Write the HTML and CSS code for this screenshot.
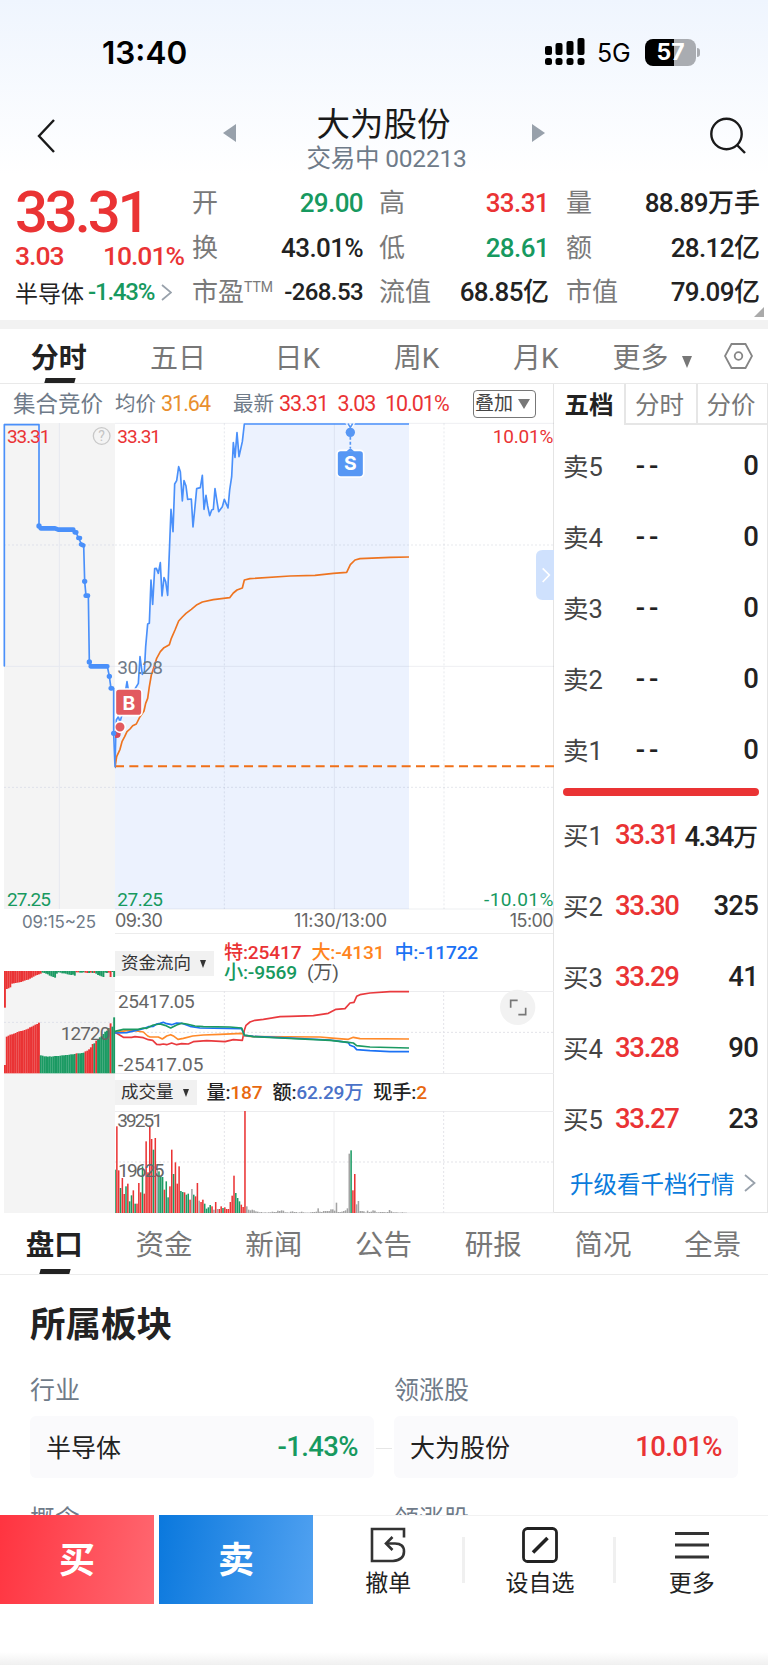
FILE: index.html
```html
<!DOCTYPE html>
<html lang="zh-CN">
<head>
    <meta charset="UTF-8">
    <title>大为股份</title>
    <meta name="viewport" content="width=device-width, initial-scale=1.0">
    <link rel="stylesheet" href="styles.css">
</head>
<body>
<div class="top">
    <div class="status">
        <span class="time">13:40</span>
        <svg class="signal" width="40" height="28" viewBox="0 0 40 28">
            <rect x="0" y="8" width="7" height="9" rx="2"/>
            <rect x="10.5" y="5" width="7" height="12" rx="2"/>
            <rect x="21.5" y="3" width="7" height="14" rx="2"/>
            <rect x="32.5" y="0" width="7" height="17" rx="2"/>
            <rect x="0" y="20" width="7" height="7" rx="2.5"/>
            <rect x="10.5" y="20" width="7" height="7" rx="2.5"/>
            <rect x="21.5" y="20" width="7" height="7" rx="2.5"/>
            <rect x="32.5" y="20" width="7" height="7" rx="2.5"/>
        </svg>
        <span class="net">5G</span>
        <span class="battery">57</span>
    </div>
    <div class="head">
        <svg width="20" height="36" viewBox="0 0 20 36"><path d="M18 2L3 18L18 34" fill="none" stroke="#1a1a1a" stroke-width="2.4"/></svg>
        <svg class="prev" width="14" height="18" viewBox="0 0 14 18"><path d="M13 0V18L0 9z" fill="#98a1ab"/></svg>
        <div class="title">
            <h1>大为股份</h1>
            <p>交易中 002213</p>
        </div>
        <svg class="next" width="14" height="18" viewBox="0 0 14 18"><path d="M0 0V18L13 9z" fill="#98a1ab"/></svg>
        <svg width="38" height="38" viewBox="0 0 38 38"><g fill="none" stroke="#1a1a1a" stroke-width="2.4"><circle cx="17.5" cy="17" r="15.2"/><path d="M28 28L36 36"/></g></svg>
    </div>
    <div class="quote">
        <div class="now">
            <div class="price num red">33.31</div>
            <div class="diff num red"><span>3.03</span><span>10.01%</span></div>
            <div class="trade">半导体<b class="num green">-1.43%</b><svg width="11" height="17" viewBox="0 0 11 17"><path d="M1 1L10 8.5L1 16" fill="none" stroke="#98a1ab" stroke-width="1.7"/></svg></div>
        </div>
        <dl class="cells">
            <dt>开</dt><dd class="green">29.00</dd><dt>高</dt><dd class="red">33.31</dd><dt>量</dt><dd>88.89<i>万手</i></dd>
            <dt>换</dt><dd>43.01%</dd><dt>低</dt><dd class="green">28.61</dd><dt>额</dt><dd>28.12<i>亿</i></dd>
            <dt>市盈<sup>TTM</sup></dt><dd class="sm">-268.53</dd><dt>流值</dt><dd>68.85<i>亿</i></dd><dt>市值</dt><dd>79.09<i>亿</i></dd>
        </dl>
        <span class="corner"></span>
    </div>
</div>

<div class="period">
    <span class="cur">分时</span><span>五日</span><span>日K</span><span>周K</span><span>月K</span>
    <span class="more">更多<i class="caret"></i></span>
    <svg width="29" height="26" viewBox="0 0 29 26"><g fill="none" stroke="#858585" stroke-width="1.8"><path d="M7.5 1H21.5L28 13L21.5 25H7.5L1 13z"/><circle cx="14.5" cy="13" r="3.8"/></g></svg>
</div>

<div class="main">
    <div class="chart">
        <div class="info">
            <span class="jj">集合竞价</span>
            <span class="avg">均价<b class="orange">31.64</b></span>
            <span class="last">最新<b class="red">33.31</b><b class="red">3.03</b><b class="red">10.01%</b></span>
            <span class="add">叠加<i class="caret"></i></span>
        </div>
        <div class="plots">
            <!-- 集合竞价 -->
            <svg class="auction" width="111" height="790" viewBox="12 9 333 2370">
                <rect x="12" y="9" width="333" height="1458" fill="#f4f4f4"/>
                <rect x="12" y="1653" width="333" height="726" fill="#f4f4f4"/>
                <path d="M178 9V1467M12 739H345" stroke="#e6e8f0" stroke-width="3"/>
                <path d="M12 375H345M12 1102H345M12 1807H345" stroke="#dfe1ea" stroke-width="3" stroke-dasharray="6 6"/>
                <g fill="none" stroke="#4a90fa" stroke-linejoin="round" stroke-linecap="round">
                    <path stroke-width="5" d="M13 738V14H117V318L122 325H165L175 329H220L228 338L236 354L245 374H251L254 484L258 527H265L268 727L272 739H322L328 769L333 805H341V940L345 1040"/>
                    <path stroke-width="14" d="M122 325H165L175 329H220M272 739H322M235 354H240M243 373L250 376M257 527H264M332 805H336M224 337H229"/>
                    <path stroke-width="16" d="M117 318h.1M254 484h.1M268 726h.1M328 769h.1M341 940h.1"/>
                </g>
                <g id="auc"></g>
                <circle cx="305" cy="48" r="25" fill="none" stroke="#c8c8c8" stroke-width="4"/>
                <text x="305" y="62" class="q">?</text>
                <text x="21" y="68" textLength="130" class="t red">33.31</text>
                <text x="21" y="1458" textLength="132" class="t green">27.25</text>
                <text x="66" y="1523" textLength="222" class="ax">09:15~25</text>
                <text x="182" y="1860" textLength="149" class="t gray">12720</text>
            </svg>
            <div class="right">
                <!-- 分时走势 -->
                <svg width="439" height="487" viewBox="15 9 1317 1461">
                    <path d="M15 1045L17 960L19 900L25 890L30 905L36 885L44 830L51 785L55 810L60 850L68 815L73 810L85 790L90 710L97 763L103 755L107 680L113 612L118 610L123 480L128 553L134 446L139 445L145 460L151 428L156 528L162 473L167 485L173 526L183 268L189 335L194 192L200 182L206 140L211 155L217 243L222 182L228 198L233 238L244 237L249 321L255 260L260 206L271 203L277 166L282 268L288 226L293 258L299 287L305 270L310 268L315 206L321 245L326 275L337 260L343 238L354 264L359 210L365 170L370 68L375 112L381 38L387 110L397 65L403 12H897V1467H15z" fill="#ecf2fe"/>
                    <path d="M15 10H1332M15 1467H1332M15 739H1332M673 10V1467" stroke="#64718c" stroke-opacity=".11" stroke-width="3"/>
                    <path d="M15 375H1332M15 1102H1332M343 10V1467M1002 10V1467" stroke="#64718c" stroke-opacity=".16" stroke-width="3" stroke-dasharray="6 6"/>
                    <path d="M15 1045L17 960L19 900L25 890L30 905L36 885L44 830L51 785L55 810L60 850L68 815L73 810L85 790L90 710L97 763L103 755L107 680L113 612L118 610L123 480L128 553L134 446L139 445L145 460L151 428L156 528L162 473L167 485L173 526L183 268L189 335L194 192L200 182L206 140L211 155L217 243L222 182L228 198L233 238L244 237L249 321L255 260L260 206L271 203L277 166L282 268L288 226L293 258L299 287L305 270L310 268L315 206L321 245L326 275L337 260L343 238L354 264L359 210L365 170L370 68L375 112L381 38L387 110L397 65L403 12H897" fill="none" stroke="#4a90fa" stroke-width="5" stroke-linejoin="round"/>
                    <path d="M15 1043L20 1010L30 988L36 965L44 950L51 935L60 927L68 917L79 912L90 890L102 873L107 850L113 835L118 800L124 765L134 735L140 715L151 695L162 683L178 674L184 655L195 630L206 603L217 591L228 580L244 568L261 554L277 546L310 539L359 533L370 519L381 510L397 504L403 480L420 476L540 468L615 466L670 460L710 457L721 434L735 420L750 416L840 412L897 411" fill="none" stroke="#ee7420" stroke-width="5" stroke-linejoin="round"/>
                    <path d="M15 1039H1332" stroke="#f07018" stroke-width="6" stroke-dasharray="27 16"/>
                    <text x="22" y="68" textLength="131" class="t red">33.31</text>
                    <text x="22" y="761" textLength="137" class="t slate">30.28</text>
                    <text x="22" y="1458" textLength="137" class="t green">27.25</text>
                    <text x="1148" y="68" textLength="182" class="t red">10.01%</text>
                    <text x="1122" y="1458" textLength="208" class="t green">-10.01%</text>
                    <g stroke="#fff" stroke-width="5">
                        <circle cx="20" cy="942" r="12" fill="#d94a5a" stroke="none"/>
                        <circle cx="30" cy="921" r="16" fill="#e25a60"/>
                        <rect x="16" y="807" width="80" height="80" rx="11" fill="#e25a60"/>
                        <path d="M706 10L721 30L736 10z" fill="#fff" stroke="none"/>
                        <path d="M714 11L721 22L728 11" fill="none" stroke="#5797f4"/>
                        <rect x="681" y="91" width="80" height="80" rx="11" fill="#5797f4"/>
                        <path d="M708 95L721 84L734 95z" fill="#5797f4" stroke="none"/>
                    </g>
                    <circle cx="721" cy="37" r="14" fill="#5797f4"/>
                    <path d="M721 50V84" stroke="#5797f4" stroke-width="5" stroke-dasharray="9 6"/>
                    <text x="57" y="869" class="mark">B</text>
                    <text x="721" y="149" class="mark">S</text>
                    <path d="M1332 390H1298Q1278 390 1278 410V520Q1278 540 1298 540H1332z" fill="#cfe1fd"/>
                    <path d="M1298 445L1318 465L1298 486" fill="none" stroke="#fff" stroke-width="5"/>
                </svg>
                <div class="axis"><span>09:30</span><span>11:30/13:00</span><span>15:00</span></div>
                <!-- 资金流向 -->
                <div class="legend flow">
                    <span class="pick">资金流向<i class="caret"></i></span>
                    <p><b class="red">特:25417</b><b class="amber">大:-4131</b><b class="blue">中:-11722</b><br><b class="green">小:-9569</b><em>(万)</em></p>
                </div>
                <svg width="439" height="83" viewBox="345 212 1317 249">
                    <path d="M345 213.5H1662M345 459.5H1662M1002 212V460" stroke="#ececee" stroke-width="3"/>
                    <path d="M345 336H1662M673 212V460M1331 212V460" stroke="#e3e3e8" stroke-width="3" stroke-dasharray="6 6"/>
                    <g fill="none" stroke-width="5" stroke-linejoin="round">
                        <path stroke="#e93a3e" d="M345 336L360 345L370 351H395L405 349L430 352L445 358L458 360L470 372L480 373L490 371L500 373L515 368L530 373L545 370L565 371L580 364L620 361L675 364L700 358L727 360L733 330L738 315L750 305L765 300L790 297L840 289L870 288L940 286L985 279L1008 267L1035 265L1050 248L1062 246L1070 228L1080 223L1110 218L1170 214H1227"/>
                        <path stroke="#ff8a2a" d="M345 336L380 331L400 330L430 335L443 347L450 350H475L487 356L500 347L512 343L522 348L534 357L550 354L578 347L610 344L660 342L727 339L733 347L760 349L960 350L1005 354L1045 357L1060 351L1080 355L1227 356"/>
                        <path stroke="#1c72f4" d="M345 338L380 337L430 325L445 319L460 318L470 311L480 309L490 306L500 310L515 313L530 308L545 309L570 318L600 323L725 325L733 345L760 348L840 352L990 359L1020 363L1045 367L1050 375L1062 379L1070 388L1110 391L1170 394H1227"/>
                        <path stroke="#1c9a62" d="M345 333L370 327H415L430 323L440 324L460 314L480 311L495 315L512 323L530 314L545 309L560 311L585 317L610 319L690 320L725 323L733 344L760 349L840 353L990 360L1045 366L1060 368L1070 376L1110 380L1227 383"/>
                    </g>
                    <circle cx="1553" cy="261" r="53" fill="#f2f2f2"/>
                    <path d="M1532 262V240H1553M1577 262V283H1555" fill="none" stroke="#777" stroke-width="5"/>
                    <text x="354" y="264" textLength="230" class="t gray">25417.05</text>
                    <text x="354" y="452" textLength="256" class="t gray">-25417.05</text>
                </svg>
                <!-- 成交量 -->
                <div class="legend vol">
                    <span class="pick">成交量<i class="caret"></i></span>
                    <p><b>量:<u class="deep">187</u></b><b>额:<u class="indigo">62.29万</u></b><b>现手:<u class="deep">2</u></b></p>
                </div>
                <svg width="439" height="102" viewBox="345 572 1317 306">
                    <path d="M345 573.5H1662M345 877H1662M1002 572V878" stroke="#ececee" stroke-width="3"/>
                    <path d="M345 725H1662M673 572V878M1331 572V878" stroke="#e3e3e8" stroke-width="3" stroke-dasharray="6 6"/>
                    <g id="vol"></g>
                    <text x="352" y="620" textLength="137" class="t gray">39251</text>
                    <text x="354" y="771" textLength="139" class="t gray">19625</text>
                </svg>
            </div>
        </div>
    </div>

    <div class="level">
        <div class="level-tab"><span class="cur">五档</span><span>分时</span><span>分价</span></div>
        <ul class="sell">
            <li><span>卖5</span><b>--</b><em>0</em></li>
            <li><span>卖4</span><b>--</b><em>0</em></li>
            <li><span>卖3</span><b>--</b><em>0</em></li>
            <li><span>卖2</span><b>--</b><em>0</em></li>
            <li><span>卖1</span><b>--</b><em>0</em></li>
        </ul>
        <div class="line"></div>
        <ul class="buy">
            <li><span>买1</span><b>33.31</b><em class="wan">4.34<i>万</i></em></li>
            <li><span>买2</span><b>33.30</b><em>325</em></li>
            <li><span>买3</span><b>33.29</b><em>41</em></li>
            <li><span>买4</span><b>33.28</b><em>90</em></li>
            <li><span>买5</span><b>33.27</b><em>23</em></li>
        </ul>
        <a class="up">升级看千档行情<svg width="12" height="18" viewBox="0 0 12 18"><path d="M1 1L10.5 9L1 17" fill="none" stroke="#98a1ab" stroke-width="1.8"/></svg></a>
    </div>
</div>

<div class="nav">
    <span class="cur">盘口</span><span>资金</span><span>新闻</span><span>公告</span><span>研报</span><span>简况</span><span>全景</span>
</div>

<div class="plate">
    <h2>所属板块</h2>
    <div class="pair">
        <div><h3>行业</h3><div class="card">半导体<b class="green">-1.43%</b></div></div>
        <i class="link"></i>
        <div><h3>领涨股</h3><div class="card">大为股份<b class="red">10.01%</b></div></div>
    </div>
    <div class="pair">
        <div><h3>概念</h3></div>
        <i class="link"></i>
        <div><h3>领涨股</h3></div>
    </div>
</div>

<div class="bar">
    <a class="btn b-buy">买</a>
    <a class="btn b-sell">卖</a>
    <a class="tool">
        <svg width="36" height="36" viewBox="0 0 36 36"><g fill="none" stroke="#333" stroke-width="2.6"><path d="M34 10.500V2H2V34H23Q34 33 34 24.500Q34 16.500 25 16.500H17"/><path d="M22.500 10L16 16.500L22.500 23"/></g></svg>
        撤单
    </a>
    <a class="tool">
        <svg width="36" height="36" viewBox="0 0 36 36"><g fill="none" stroke="#222" stroke-width="2.8"><rect x="1.500" y="1.500" width="33" height="33" rx="4"/><path d="M11 25.500L25.500 11" stroke-width="3.6"/></g></svg>
        设自选
    </a>
    <a class="tool">
        <svg width="36" height="36" viewBox="0 0 36 36"><path d="M1 6.500H35M1 18H35M1 30H35" stroke="#333" stroke-width="2.8"/></svg>
        更多
    </a>
</div>
<div class="home"></div>

<script>
    var color={r:"#ea3334",g:"#1b9a63",h:"#a3a3a3"};

    function bar(x,y,w,h,c){
        return '<rect x="'+x+'" y="'+y+'" width="'+w+'" height="'+h+'" fill="'+color[c]+'"/>';
    }

    // 成交量，每分钟一根，第一根只露一半
    var vol="g130 r260 r128 g75 r105 r57 g80 r88 g35 g53 r68 g28 r28 r90 r62 g140 r58 r215 r122 r260 r222 g190 r225 h130 g125 g110 g108 r70 g95 g47 r80 r190 g117 r152 r88 r140 g66 g63 r62 g55 g58 r40 h72 g55 r50 r90 h37 r33 r40 g28 g13 g17 g24 r20 h10 r33 h12 r12 r20 g15 r17 r12 r12 r33 r52 r112 g60 g45 g35 r25 r18 r306 h20 h10 h8 h10 h8 h5 h4 h2 h3 h1 h2 h1 h2 h2 h4 h3 h3 h7 h6 h8 h7 h2 h2 h1 h4 h5 h3 h3 h1 h2 h4 h2 h1 h1 h1 h2 h3 h3 h4 h14 h4 h3 h6 h6 h6 h6 h11 h11 h7 h31 h3 h3 h4 h6 h8 h14 h178 g188 r68 r117 h26 h36 h6 h6 h5 h1 h7 h3 h4 h8 h7 h2 h2 h3 h3 h3 h2 h3 h9 h5 h2 h2 h2 h1 h1 h2 h1 h1".split(" ");
    document.querySelector("#vol").innerHTML=vol.map(function (v,i){
        var h=v.slice(1)*1;
        var x=i?342.8+i*5.49:345;
        return bar(x.toFixed(1),878-h,i?4.6:2.4,h,v.charAt(0));
    }).join("");

    // 竞价：上面未匹配量，下面匹配量
    var up="r110 r54 r52 r49 r38 r37 r36 r35 r34 r33 r31 r29 r27 r26 r23 r20 r17 r14 r12 r10 r8 g5 g6 g8 g10 g14 g16 g18 g20 g8 g4 g5 g7 g7 g8 g10 g11 g12 g11 g14 r4 r4 g5 g5 g4 r5 r6 g6 r5 g6 r6 g8 g12 g14 g16 g18 g5 g6 r5 r18 g3 g18".split(" ");
    var down="r25 r110 r113 r116 r117 r119 r121 r124 r126 r127 r128 r130 r132 r134 r138 r140 r143 r146 r148 r152 g54 g53 g51 g51 g50 g51 g50 g51 g52 g52 g52 g53 g54 g54 g55 g55 g56 g57 g57 g58 r60 g60 g60 g61 g62 r66 r68 r72 r78 r88 g90 r98 g102 g108 g112 g118 g125 g128 g136 r150 g140 g168".split(" ");
    function auc(list,top){
        return list.map(function (v,i){
            var h=v.slice(1)*1,w=333/list.length;
            return bar((12+i*w).toFixed(1),top?1653:1960-h,(w+.3).toFixed(1),h,v.charAt(0));
        }).join("");
    }
    document.querySelector("#auc").innerHTML=auc(up,true)+auc(down,false);
</script>
</body>
</html>
```

FILE: styles.css
```css
*{
    margin: 0;
    padding: 0;
    box-sizing: border-box;
}
body{
    width: 768px;
    height: 1665px;
    overflow: hidden;
    background: #fff;
    color: #222;
    font-family: Roboto, "Noto Sans CJK SC", sans-serif;
}
i,em,u{
    font-style: normal;
    text-decoration: none;
}
b{
    font-weight: 500;
}
ul{
    list-style: none;
}
svg{
    display: block;
    flex: none;
}
.red{ color: #ea3334; fill: #ea3334; }
.green{ color: #17995f; fill: #17995f; }
.orange{ color: #e98f2e; }
.amber{ color: #ff8420; }
.blue{ color: #1c72f4; }
.deep{ color: #e8680f; }
.indigo{ color: #4a72c8; }
.gray{ fill: #666; }
.slate{ fill: #6f7b89; }

/* 顶部 */
.top{
    height: 320px;
    background: linear-gradient(#eff5fe, #fff 175px);
}
.status{
    height: 104px;
    padding: 0 72px 0 102px;
    display: flex;
    align-items: center;
    font-family: Inter, sans-serif;
    color: #000;
}
.time{
    font-size: 31.500px;
    font-weight: 600;
    flex: 1;
    padding-top: 1px;
}
.net{
    font-size: 25px;
    width: 36px;
    margin: 1px 12px 0 12px;
    letter-spacing: -.2px;
}
.battery{
    position: relative;
    width: 51px;
    height: 27px;
    border-radius: 8px;
    background: linear-gradient(90deg, #000 57%, #a9acb1 57%);
    color: #fff;
    font-size: 23px;
    font-weight: 700;
    line-height: 27px;
    text-align: center;
}
.battery:after{
    content: "";
    position: absolute;
    right: -4px;
    top: 9px;
    width: 3px;
    height: 9px;
    border-radius: 0 3px 3px 0;
    background: #a9acb1;
}
.head{
    height: 76px;
    padding: 0 21px 0 36px;
    display: flex;
    align-items: center;
}
.head > svg{
    margin-top: -12px;
}
.head .prev,.head .next{
    margin-top: -19px;
}
.prev{
    margin-left: 167px;
}
.title{
    flex: 1;
    height: 76px;
    text-align: center;
    margin-right: -8px;
}
.next{
    margin-right: 163px;
}
.title h1{
    font-size: 33.500px;
    line-height: 40px;
    font-weight: 400;
    margin: 1px 0 0 -10px;
    color: #1a1a1a;
}
.title p{
    font-size: 24.500px;
    line-height: 26px;
    margin: 1px 0 0 -4px;
    color: #6f7b89;
    letter-spacing: -.2px;
}
.quote{
    position: relative;
    height: 140px;
    padding: 0 8px 0 15px;
    display: flex;
}
.num{
    font-weight: 500;
}
.now{
    width: 177px;
    flex: none;
}
.price{
    font-size: 58px;
    line-height: 64px;
    letter-spacing: -3.1px;
}
.diff{
    display: flex;
    width: 169px;
    justify-content: space-between;
    font-size: 26.500px;
    line-height: 24px;
    letter-spacing: -1px;
}
.trade{
    display: flex;
    align-items: center;
    font-size: 23px;
    height: 48px;
}
.trade b{
    font-size: 24px;
    margin: 0 7px 0 4px;
    letter-spacing: -1.2px;
}
.cells{
    display: grid;
    grid-template-columns: 82px 89px 98px 88px 72px 1fr;
    grid-auto-rows: 44.500px;
    line-height: 47px;
    font-size: 26px;
    flex: 1;
}
.cells dt:nth-of-type(3n+2){
    padding-left: 16px;
}
.cells dt:nth-of-type(3n){
    padding-left: 17px;
}
.cells dt{
    color: #7a7a7a;
    white-space: nowrap;
}
.cells dd{
    font-weight: 500;
    white-space: nowrap;
    letter-spacing: -.6px;
    justify-self: end;
}
.cells dd i{
    letter-spacing: 0;
}
.cells .sm{
    font-size: 24px;
}
.cells sup{
    font-size: 14px;
    line-height: 0;
    vertical-align: 9px;
}
.corner{
    position: absolute;
    right: 4px;
    bottom: 3px;
    border: 5px solid transparent;
    border-right-color: #aaa;
    border-bottom-color: #aaa;
}

/* 周期切换 */
.period{
    height: 64px;
    border-top: 9px solid #f2f2f2;
    border-bottom: 1px solid #e9e9e9;
    display: flex;
    align-items: center;
    font-size: 28px;
    color: #777;
}
.period span{
    width: 119.300px;
    height: 54px;
    line-height: 59px;
    text-align: center;
    padding-right: 2px;
}
.period .more{
    width: 104px;
    margin-left: 12px;
    text-align: left;
    padding-left: 4px;
}
.caret{
    display: inline-block;
    border: 5.500px solid transparent;
    border-top: 12px solid #777;
    border-bottom: 0;
}
.period .caret{
    margin-left: 13px;
}
.period svg{
    margin-left: 12px;
}
.cur{
    font-weight: 700;
    color: #222;
}
.period .cur,.nav .cur{
    position: relative;
}
.period .cur:after,.nav .cur:after{
    content: "";
    position: absolute;
    left: 50%;
    bottom: 0;
    width: 30px;
    height: 5px;
    margin-left: -15px;
    background: #222;
    transform: skewX(-15deg);
}

/* 走势 */
.main{
    height: 829px;
    display: flex;
}
.chart{
    width: 554px;
    padding-left: 4px;
    border-right: 1px solid #e4e4e4;
}
.info{
    height: 39px;
    padding: 0 17px 0 9px;
    display: flex;
    align-items: center;
    font-size: 20.500px;
    line-height: 36px;
    color: #6f7b89;
    white-space: nowrap;
}
.info > span{
    margin-top: 1px;
}
.info b{
    font-weight: 400;
    margin-left: 5px;
    font-size: 21.500px;
    letter-spacing: -1px;
}
.jj{
    font-size: 22.500px;
    width: 102px;
}
.avg{
    width: 118px;
}
.last{
    flex: 1;
}
.last b + b{
    margin-left: 9.500px;
}
.info .add{
    margin-top: 1px;
    width: 63px;
    height: 28px;
    border: 1.500px solid #777;
    border-radius: 4px;
    font-size: 19px;
    line-height: 25px;
    color: #444;
    padding-left: 1px;
}
.add .caret{
    margin-left: 5px;
    border-width: 10px 6px 0;
    vertical-align: 1px;
}
.plots{
    display: flex;
}
.auction{
    position: relative;
    overflow: visible;
}
.right{
    width: 438px;
}
.right svg{
    width: 439px;
    overflow: visible;
}
.t{
    font-size: 57px;
}
.q{
    font-size: 42px;
    text-anchor: middle;
    fill: #c4c4c4;
}
.ax{
    font-family: Inter, sans-serif;
    font-size: 51px;
    fill: #6f7b89;
}
.mark{
    font: 700 58px Inter, sans-serif;
    text-anchor: middle;
    fill: #fff;
}
.axis{
    height: 24px;
    display: flex;
    justify-content: space-between;
    border-bottom: 1px solid #ececec;
    font: 18px/22px Inter, sans-serif;
    letter-spacing: -.6px;
    color: #666;
}
.axis span:nth-child(2){
    margin-left: 9px;
    letter-spacing: -.2px;
}
.legend{
    display: flex;
    white-space: nowrap;
}
.flow{
    height: 57px;
}
.vol{
    height: 37px;
}
.pick{
    height: 25px;
    background: #f1f1f1;
    font-size: 17.500px;
    line-height: 25px;
    padding: 0 8px 0 6px;
    color: #333;
}
.pick .caret{
    margin-left: 9px;
    border-width: 8px 3.500px 0;
    border-top-color: #333;
    vertical-align: 1px;
}
.flow .pick{
    margin-top: 17px;
}
.vol .pick{
    margin-top: 6px;
}
.legend p{
    font-size: 19.200px;
    margin-left: 10px;
    letter-spacing: -.2px;
}
.flow p{
    line-height: 20px;
    padding-top: 9px;
}
.vol p{
    line-height: 37px;
}
.legend b{
    margin-right: 10px;
}
.legend em{
    color: #555;
}

/* 五档 */
.level{
    flex: 1;
    border: 1px solid #e4e4e4;
    border-width: 0 1px 1px 0;
}
.level-tab{
    display: grid;
    grid-template-columns: 70px 72px 71px;
    height: 41px;
    font-size: 24.500px;
    line-height: 44px;
    text-align: center;
    color: #777;
}
.level-tab span{
    height: 41px;
}
.level-tab span + span{
    border: 2px solid #e6e6e6;
    border-width: 0 0 2px 2px;
    padding-right: 3px;
}
.level li{
    display: flex;
    align-items: center;
    height: 71px;
    padding: 0 9px 0 9px;
    font-size: 27.500px;
}
.level li span{
    width: 52px;
    font-size: 25.500px;
    margin-top: -3px;
    color: #444;
}
.level b{
    letter-spacing: -1.3px;
    color: #ea3334;
}
.level .sell b{
    width: 44px;
    text-align: center;
    margin-left: 12px;
    letter-spacing: 4px;
    color: #222;
}
.level em{
    flex: 1;
    text-align: right;
    font-weight: 500;
    letter-spacing: -.8px;
    white-space: nowrap;
}
.level em i{
    font-size: 25px;
}
.level .wan{
    letter-spacing: -1.5px;
}
.wan i{
    letter-spacing: 0;
}
.sell{
    padding-top: 5px;
}
.buy{
    padding-top: 3px;
}
.line{
    height: 8px;
    border-radius: 4px;
    background: #ea3334;
    margin: 3px 8px 0 9px;
}
.up{
    display: flex;
    align-items: center;
    height: 58px;
    padding-left: 16px;
    font-size: 23.500px;
    color: #0a7bdc;
    white-space: nowrap;
}
.up svg{
    margin-left: 9px;
}

/* 底部标签 */
.nav{
    height: 62px;
    display: grid;
    grid-template-columns: repeat(7, 1fr);
    border-bottom: 1px solid #ececec;
    font-size: 28.500px;
    line-height: 66px;
    text-align: center;
    color: #777;
}
.nav span{
    height: 61px;
    padding-right: 1px;
}
.plate{
    height: 240px;
    padding: 26px 30px 0;
    overflow: hidden;
}
.plate h2{
    font-size: 35.500px;
    line-height: 48px;
}
.pair{
    display: grid;
    grid-template-columns: 344px 16px 344px;
    column-gap: 2px;
    align-items: end;
    padding-top: 24px;
    height: 129px;
}
.pair:last-child{
    padding-top: 24px;
    align-items: start;
}
.plate h3{
    font-size: 25px;
    font-weight: 400;
    line-height: 36px;
    color: #6f7b89;
}
.card{
    height: 62px;
    margin-top: 7px;
    border-radius: 6px;
    background: #fafafc;
    display: flex;
    align-items: center;
    justify-content: space-between;
    padding: 0 16px 2px;
    font-size: 25px;
}
.card b{
    font-size: 27.500px;
    letter-spacing: -.6px;
}
.link{
    height: 1px;
    background: #e6e6e6;
    margin-bottom: 29px;
}
.pair:last-child .link{
    visibility: hidden;
}
.bar{
    height: 89px;
    display: flex;
}
.btn{
    width: 154px;
    font-size: 36px;
    font-weight: 700;
    line-height: 92px;
    height: 89px;
    text-align: center;
    color: #fff;
}
.b-buy{
    background: linear-gradient(100deg, #ff3440, #ff6871);
    margin-right: 5px;
}
.b-sell{
    background: linear-gradient(100deg, #0a78dd, #52a2f1);
}
.tool{
    position: relative;
    flex: 1;
    display: flex;
    flex-direction: column;
    align-items: center;
    border-top: 1px solid #f2f2f2;
    padding: 11px 1px 0 0;
    font-size: 23px;
    line-height: 42px;
    color: #222;
}
.tool + .tool:before{
    content: "";
    position: absolute;
    left: -3px;
    top: 21px;
    width: 3px;
    height: 46px;
    background: #f0f0f0;
}
.home{
    height: 61px;
    background: linear-gradient(#fff 48px, #f0f0f0);
}
```
